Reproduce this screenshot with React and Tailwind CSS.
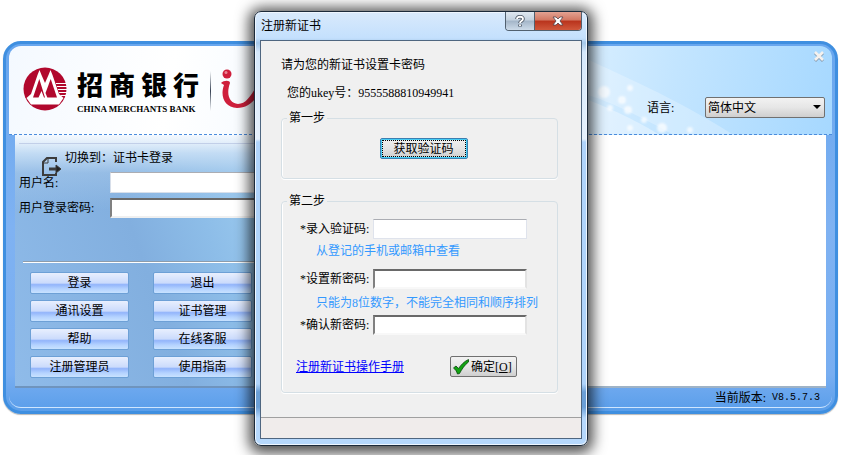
import React, { useState } from 'react';

const menuButtons = [
  '登录',
  '退出',
  '通讯设置',
  '证书管理',
  '帮助',
  '在线客服',
  '注册管理员',
  '使用指南',
];

function BankLogo() {
  return (
    <svg viewBox="0 0 44 44" className="h-11 w-11 shrink-0">
      <circle cx="22" cy="22" r="21.5" fill="#b1082d" />
      <path d="M3.5 31 L8 27 L14.5 8 L16.5 3 L18.5 8 L22 16 L25.5 8 L27.5 3 L29.5 8 L36 27 L40.5 31 L36 37.5 H8 Z" fill="#fff" />
      <path d="M16.3 12 L10 30.5 H15.5 L18.5 24 L21 30.5 H22 Z" fill="#b1082d" />
      <path d="M27.7 12 L22.5 26 L24.3 30.5 H34 Z" fill="#b1082d" />
      <path d="M33 16.5 H44 M34 19.5 H44 M35 22.5 H44 M36 25.5 H44 M37.5 28.5 H43" stroke="#fff" strokeWidth="1.2" />
    </svg>
  );
}

function ProductLogo() {
  return (
    <svg viewBox="0 0 80 44" className="h-11 w-20 shrink-0">
      <circle cx="6" cy="7" r="4.5" fill="#cf1f3c" />
      <circle cx="5" cy="5.5" r="1.5" fill="#ea8595" />
      <path d="M0 16 C3 13 9 13 9 16 C5 27 8 36 17 37 C25 37 30 29 36 18 L41 20 C36 32 28 41 16 41 C3 40 -1 29 3 18 Z" fill="#cf1f3c" />
    </svg>
  );
}

function Sparkles() {
  return (
    <svg viewBox="0 0 260 88" className="absolute top-0 right-0 h-[88px] w-[260px]" fill="#fff">
      <path d="M0 6 C50 30 100 50 160 88 H100 C60 66 30 52 0 44 Z" opacity="0.25" />
      <path d="M0 48 C40 62 70 78 86 88 H0 Z" opacity="0.35" />
      <g opacity="0.7" className="blur-[1px]">
        <circle cx="12" cy="36" r="5" />
        <circle cx="32" cy="46" r="6" />
        <circle cx="38" cy="62" r="3" />
        <circle cx="50" cy="54" r="4" />
        <circle cx="58" cy="42" r="3" />
        <circle cx="56" cy="64" r="4" />
        <circle cx="72" cy="74" r="3" />
        <circle cx="90" cy="82" r="5" />
        <circle cx="58" cy="82" r="3" />
        <circle cx="118" cy="84" r="3" />
      </g>
    </svg>
  );
}

function Header() {
  return (
    <header className="relative flex h-[89px] items-start rounded-t-xl border-b border-dashed border-[#4a8cdc] bg-[linear-gradient(100deg,#f4f9ff_0%,#ffffff_20%,#edf6ff_45%,#d8eeff_68%,#c3e5ff_80%,#a6d8ff_100%)] pl-3.5">
      <Sparkles />
      <div className="flex items-start pt-[21px]">
        <BankLogo />
        <div className="ml-2.5 flex flex-col pt-1">
          <div className="flex gap-1.5 text-[26px] leading-8 font-black text-black">
            <span>招</span>
            <span>商</span>
            <span>银</span>
            <span>行</span>
          </div>
          <div className="font-['Liberation_Serif',serif] text-[9px] leading-3 font-bold whitespace-nowrap">
            CHINA MERCHANTS BANK
          </div>
        </div>
        <div className="mt-1 ml-[11px] h-10 w-px bg-linear-to-b from-transparent via-gray-700 to-transparent" />
        <div className="ml-2.5">
          <ProductLogo />
        </div>
      </div>

      <div className="relative ml-auto flex flex-col items-end pr-[7px]">
        <button aria-label="关闭" className="h-5">
          <svg viewBox="0 0 12 12" className="h-3 w-3">
            <path d="M2 3 L10 11 M10 3 L2 11" stroke="#8aa0b5" strokeWidth="3" />
            <path d="M2 2 L10 10 M10 2 L2 10" stroke="#f4f1ee" strokeWidth="2.5" />
          </svg>
        </button>
        <div className="mt-[31px] flex items-center">
          <label htmlFor="lang" className="w-[58px]">语言:</label>
          <div className="relative">
            <select
              id="lang"
              className="h-[21px] w-[120px] appearance-none rounded-xs border border-[#707070] bg-linear-to-b from-[#f2f2f2] via-[#e6e6e6] to-[#cfcfcf] pl-0.5 text-xs leading-4"
            >
              <option>简体中文</option>
              <option>English</option>
            </select>
            <svg viewBox="0 0 8 4" className="pointer-events-none absolute top-2 right-1 h-1 w-2">
              <path d="M0 0 H8 L4 4 Z" fill="#000" />
            </svg>
          </div>
        </div>
      </div>
    </header>
  );
}

function LoginPanel() {
  const [user, setUser] = useState('');
  const [password, setPassword] = useState('');

  return (
    <section className="w-1/2 border-b-2 border-[#6f94bd] bg-[linear-gradient(180deg,#f4f9ff_0px,#e2eefa_8px,#c3dcf4_18px,#a9caeb80_38px,transparent_75px),linear-gradient(70deg,#8fbbe9_0%,#82afdf_35%,#8dbde8_50%,#a8d6f4_75%,#b8dff8_100%)] pl-1">
      <div className="mt-2 flex h-[27px] items-start border-t border-[#c2cfe8] pl-[22px]">
        <svg viewBox="0 0 22 22" className="mt-3 h-[22px] w-[22px] shrink-0" fill="none" stroke="#3c3c3c" strokeWidth="2">
          <path d="M15 6 V2 H6 L2 6 V19 H15 V17" />
          <path d="M2 7 H7 V2" strokeWidth="1" />
          <path d="M8 13 H16" strokeWidth="3" />
          <path d="M15 9 L20 13 L15 17 Z" fill="#222" strokeWidth="1" />
        </svg>
        <button className="ml-0.5 pt-1.5 leading-4">切换到：证书卡登录</button>
      </div>
      <div className="flex h-[25px] items-center">
        <label htmlFor="user" className="w-[91px] shrink-0">用户名:</label>
        <input
          id="user"
          value={user}
          onChange={(e) => setUser(e.target.value)}
          className="h-[21px] flex-1 border border-[#d8dfea] border-t-[#abadb3] bg-white px-1"
        />
      </div>
      <div className="flex h-[25px] items-center">
        <label htmlFor="password" className="w-[91px] shrink-0">用户登录密码:</label>
        <input
          id="password"
          type="password"
          value={password}
          onChange={(e) => setPassword(e.target.value)}
          className="h-5 flex-1 border-2 border-t-[#696969] border-r-[#e3e3e3] border-b-[#f0f0f0] border-l-[#808080] bg-white px-1"
        />
      </div>
      <hr className="mt-[41px] ml-1 h-0.5 border-0 border-t border-[#8d9cab] bg-white" />
      <div className="mt-[9px] mb-2 ml-[11px] grid grid-cols-[99px_99px] gap-x-6 gap-y-1.5">
        {menuButtons.map((label) => (
          <button
            key={label}
            className="h-[22px] rounded-xs border border-[#6da0d6] bg-[linear-gradient(180deg,#e8effe_0%,#cbdbfc_50%,#93b5fb_58%,#b5d3ff_80%,#c8e2ff_100%)] leading-4"
          >
            {label}
          </button>
        ))}
      </div>
    </section>
  );
}

function MainWindow() {
  return (
    <main className="mr-1 ml-[3px] rounded-[18px] border-3 border-[#3f8fe0] bg-[linear-gradient(180deg,#68a6ee_0%,#7fb2f2_50%,#78aef1_90%,#5a9eea_100%)] px-[3px] pt-0.5 pb-[3px] shadow-[0_1px_1px_#b8b8b8]">
      <Header />
      <div className="mr-1.5 ml-1.5 flex items-stretch bg-white">
        <LoginPanel />
        <div className="flex-1 border-b-2 border-[#9fb3c6]" />
      </div>
      <footer className="flex h-5 items-start justify-end rounded-b-xl border-b border-[#cfe6ff] pr-3 leading-5">
        当前版本:<span className="ml-1.5 font-['Liberation_Mono',monospace] text-[10px]">V8.5.7.3</span>
      </footer>
    </main>
  );
}

function Field({ id, label, type = 'text' }) {
  const border =
    type === 'password'
      ? 'border-2 border-t-[#696969] border-r-[#e3e3e3] border-b-[#f8f8f8] border-l-[#808080]'
      : 'border border-[#dfe3ec] border-t-[#abadb3]';
  return (
    <div className="flex h-5 items-center">
      <label htmlFor={id} className="w-[73px] whitespace-nowrap">{label}</label>
      <input id={id} type={type} className={`h-5 w-[154px] bg-white px-1 ${border}`} />
    </div>
  );
}

function CertDialog() {
  return (
    <div
      role="dialog"
      aria-labelledby="dialog-title"
      className="absolute top-[11px] left-1/2 w-[334px] -translate-x-1/2 rounded-[7px] border border-[#1c2a3a] bg-[linear-gradient(180deg,#d9eafc_0px,#c4e0fd_26px,#a5c8ea_31px,#d5e8fb_40px,#e6f1fc_127px,#b0d4fb_130px,#b0d4fb_372px,#6b9fd6_380px,#6b9fd6_395px,#b6d8fc_406px)] px-[5px] pb-1.5 shadow-[0_2px_14px_5px_rgba(0,0,0,0.7),inset_0_0_0_1px_#eef6ff]"
    >
      <div className="flex h-7 items-start">
        <h1 id="dialog-title" className="pl-px leading-7">注册新证书</h1>
        <div className="ml-auto flex h-[19px] overflow-hidden rounded-b-sm border border-t-0 border-[#51606f]">
          <button aria-label="帮助" className="flex w-7 items-center justify-center bg-[linear-gradient(180deg,#dfe8f1_0%,#c3d1df_45%,#a3b5c8_50%,#cddbe9_100%)]">
            <svg viewBox="0 0 10 12" className="h-3 w-2.5" fill="none">
              <path d="M2 4 C2 1 8 1 8 4 C8 6 5 6 5 8 M5 9.5 V11.5" stroke="#4d5765" strokeWidth="3.6" />
              <path d="M2 4 C2 1 8 1 8 4 C8 6 5 6 5 8 M5 9.5 V11" stroke="#fff" strokeWidth="1.8" />
            </svg>
          </button>
          <button aria-label="关闭" className="flex w-[47px] items-center justify-center border-l border-[#51606f] bg-[linear-gradient(180deg,#e3a292_0%,#d27762_45%,#b9331c_50%,#d0583c_100%)]">
            <svg viewBox="0 0 12 10" className="h-2.5 w-3">
              <path d="M1 1 H4 L6 3 L8 1 H11 L8 5 L11 9 H8 L6 7 L4 9 H1 L4 5 Z" fill="#fff" stroke="#53414a" strokeWidth="0.8" />
            </svg>
          </button>
        </div>
      </div>

      <div className="border border-[#4f6680] bg-[#f0f0f0]">
        <form className="pt-4 pr-[23px] pb-6 pl-5" onSubmit={(e) => e.preventDefault()}>
          <p className="leading-4">请为您的新证书设置卡密码</p>
          <p className="mt-3 pl-1.5 leading-4">
            您的ukey号：9555588810949941
          </p>

          <fieldset className="mt-[9px] h-[69px] rounded-sm border border-[#d5dfe5] pl-2 shadow-[inset_1px_0_0_#fff,0_1px_0_#fff]">
            <legend className="-ml-[3px] px-0.5 leading-4">第一步</legend>
            <button
              type="button"
              className="mx-auto mt-3 block h-[21px] w-[88px] rounded-xs border border-[#3c7fb1] bg-linear-to-b from-[#f0f0f0] via-[#e4e4e4] to-[#cdcdcd] shadow-[inset_0_0_0_1px_#45cdf5] outline outline-1 -outline-offset-3 outline-dotted outline-black"
            >
              获取验证码
            </button>
          </fieldset>

          <fieldset className="mt-3.5 rounded-sm border border-[#d5dfe5] pb-[15px] pl-[18px] shadow-[inset_1px_0_0_#fff,0_1px_0_#fff]">
            <legend className="-ml-[13px] px-0.5 leading-4">第二步</legend>
            <div className="pt-2.5">
              <Field id="code" label="*录入验证码:" />
              <p className="mt-1 mb-2.5 pl-4 leading-4 text-[#3399ff]">从登记的手机或邮箱中查看</p>
              <Field id="new-pin" label="*设置新密码:" type="password" />
              <p className="mt-1.5 mb-1 pl-4 leading-4 whitespace-nowrap text-[#3399ff]">只能为8位数字，不能完全相同和顺序排列</p>
              <Field id="confirm-pin" label="*确认新密码:" type="password" />
            </div>
            <div className="mt-[21px] -ml-1 flex items-center justify-between pr-10">
              <a href="#manual" className="leading-4 text-[#0000ff] underline">注册新证书操作手册</a>
              <button
                type="submit"
                className="flex h-[21px] w-[67px] items-center gap-0.5 rounded-xs border border-[#707070] bg-linear-to-b from-[#f2f2f2] via-[#e6e6e6] to-[#cfcfcf] pl-0.5 leading-4 whitespace-nowrap"
              >
                <svg viewBox="0 0 16 16" className="h-4 w-4 shrink-0">
                  <path d="M0.5 9 L3 7 L5.5 9.5 C8 6 11 2.5 15.5 0.5 V3 C11.5 6 9 10 6.5 14.5 L4.5 15 C3.5 12 2.5 10.5 0.5 9 Z" fill="#12a312" stroke="#06480a" strokeWidth="0.8" />
                </svg>
                <span>确定[<u>O</u>]</span>
              </button>
            </div>
          </fieldset>
        </form>
        <div className="h-[21px] border-t border-[#a0a0a0] bg-[#f0eceb]" />
      </div>
    </div>
  );
}

export default function App() {
  return (
    <div className="relative min-h-screen overflow-hidden bg-white pt-[41px] font-['Liberation_Serif','Noto_Sans_CJK_SC',sans-serif] text-xs text-black">
      <MainWindow />
      <CertDialog />
    </div>
  );
}
